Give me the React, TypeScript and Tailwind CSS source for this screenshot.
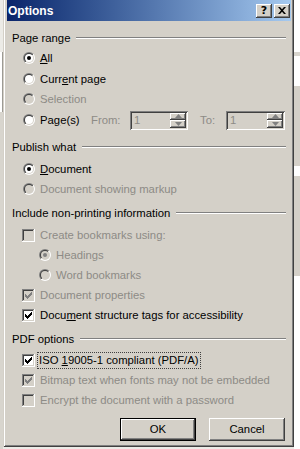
import React from 'react';

const FACE = '#d4d0c8';

function Radio({ checked = false, disabled = false }: { checked?: boolean; disabled?: boolean }) {
  return (
    <svg width="12" height="12" viewBox="0 0 12 12" className="shrink-0 block">
      <defs>
        <linearGradient id="rOuter" x1="0" y1="0" x2="1" y2="1">
          <stop offset="0.5" stopColor="#808080" />
          <stop offset="0.5" stopColor="#ffffff" />
        </linearGradient>
        <linearGradient id="rInner" x1="0" y1="0" x2="1" y2="1">
          <stop offset="0.5" stopColor="#404040" />
          <stop offset="0.5" stopColor="#d4d0c8" />
        </linearGradient>
      </defs>
      <circle cx="6" cy="6" r="6" fill="url(#rOuter)" />
      <circle cx="6" cy="6" r="5" fill="url(#rInner)" />
      <circle cx="6" cy="6" r="4" fill={disabled ? FACE : '#ffffff'} />
      {checked && <circle cx="6" cy="6" r="2" fill={disabled ? '#808080' : '#000000'} />}
    </svg>
  );
}

function Check({ checked = false, disabled = false }: { checked?: boolean; disabled?: boolean }) {
  const ys = [5, 6, 7, 6, 5, 4, 3];
  return (
    <svg width="13" height="13" viewBox="0 0 13 13" className="shrink-0 block">
      <rect x="0" y="0" width="13" height="13" fill="#ffffff" />
      <rect x="0" y="0" width="12" height="1" fill="#808080" />
      <rect x="0" y="0" width="1" height="12" fill="#808080" />
      <rect x="1" y="1" width="10" height="1" fill="#404040" />
      <rect x="1" y="1" width="1" height="10" fill="#404040" />
      <rect x="1" y="11" width="11" height="1" fill={FACE} />
      <rect x="11" y="1" width="1" height="11" fill={FACE} />
      <rect x="2" y="2" width="9" height="9" fill={disabled ? FACE : '#ffffff'} />
      {checked &&
        ys.map((y, i) => (
          <rect key={i} x={3 + i} y={y} width="1" height="3" fill={disabled ? '#808080' : '#000000'} />
        ))}
    </svg>
  );
}

function GroupHeader({ label }: { label: string }) {
  return (
    <div className="flex items-center h-[20px]">
      <span>{label}</span>
      <div className="flex-1 ml-[6px] h-[2px] border-t border-b border-t-[#808080] border-b-white" />
    </div>
  );
}

function RadioRow({
  children,
  checked,
  disabled,
  indent = 'ml-[11px]',
  className = '',
}: {
  children: React.ReactNode;
  checked?: boolean;
  disabled?: boolean;
  indent?: string;
  className?: string;
}) {
  return (
    <div className={`flex items-center h-[20px] ${indent} ${className}`}>
      <Radio checked={checked} disabled={disabled} />
      <span className={`ml-[5px] ${disabled ? 'text-[#8d8b86]' : 'text-black'}`}>{children}</span>
    </div>
  );
}

function CheckRow({
  children,
  checked,
  disabled,
  className = '',
}: {
  children: React.ReactNode;
  checked?: boolean;
  disabled?: boolean;
  className?: string;
}) {
  return (
    <div className={`flex items-center h-[20px] ml-[10px] ${className}`}>
      <Check checked={checked} disabled={disabled} />
      <span className={`ml-[5px] ${disabled ? 'text-[#8d8b86]' : 'text-black'}`}>{children}</span>
    </div>
  );
}

function SpinArrow({ up }: { up?: boolean }) {
  return (
    <div className="h-[9px] w-[16px] flex items-center justify-center bg-[#d4d0c8] shadow-[inset_-1px_-1px_0_#404040,inset_1px_1px_0_#ffffff,inset_-2px_-2px_0_#808080]">
      <svg width="7" height="4" viewBox="0 0 7 4">
        {up ? (
          <polygon points="3.5,0 7,4 0,4" fill="#808080" />
        ) : (
          <polygon points="0,0 7,0 3.5,4" fill="#808080" />
        )}
      </svg>
    </div>
  );
}

function Spin({ w }: { w: string }) {
  return (
    <div
      className={`flex items-stretch h-[19px] ${w} bg-[#d4d0c8] p-[2px] shadow-[inset_1px_1px_0_#808080,inset_-1px_-1px_0_#ffffff,inset_2px_2px_0_#404040,inset_-2px_-2px_0_#d4d0c8]`}
    >
      <span className="flex-1 pl-[2px] leading-[15px] text-[#8d8b86]">1</span>
      <div className="flex flex-col justify-between">
        <SpinArrow up />
        <SpinArrow />
      </div>
    </div>
  );
}

export default function App() {
  return (
    <div
      className="w-[300px] h-[449px] flex overflow-hidden bg-[#ecebe7] text-[11.3px] text-black"
      style={{ fontFamily: '"Liberation Sans", Arial, sans-serif' }}
    >
      {/* left background strip */}
      <div className="w-[3px] flex flex-col">
        <div className="h-[52px] bg-[#ecebe7]" />
        <div className="h-[60px] bg-white border-r border-[#9c9a94]" />
        <div className="flex-1 bg-[#d8d5ce]" />
      </div>

      {/* dialog window */}
      <div className="w-[291px] h-[447px] flex flex-col bg-[#d4d0c8] pl-[4px] pr-[3px] shadow-[inset_1px_0_0_#d4d0c8,inset_-1px_-1px_0_#404040,inset_2px_0_0_#ffffff,inset_-2px_-2px_0_#808080]">
        {/* title bar */}
        <div className="h-[21px] flex items-center pl-[1px] pr-[1px] bg-linear-to-r from-[#0a246a] to-[#a6caf0]">
          <span className="font-bold text-white text-[12px]">Options</span>
          <div className="ml-auto flex gap-[2px]">
            <div className="w-[16px] h-[14px] flex items-center justify-center bg-[#d4d0c8] shadow-[inset_-1px_-1px_0_#404040,inset_1px_1px_0_#ffffff,inset_-2px_-2px_0_#808080]">
              <span className="font-bold text-[11px] leading-none text-black" style={{ fontFamily: '"DejaVu Sans", sans-serif' }}>?</span>
            </div>
            <div className="w-[16px] h-[14px] flex items-center justify-center bg-[#d4d0c8] shadow-[inset_-1px_-1px_0_#404040,inset_1px_1px_0_#ffffff,inset_-2px_-2px_0_#808080]">
              <svg width="8" height="7" viewBox="0 0 8 7">
                <path d="M0 0h2l2 2.3L6 0h2L5 3.5L8 7H6L4 4.7L2 7H0l3-3.5z" fill="#000" />
              </svg>
            </div>
          </div>
        </div>

        {/* content */}
        <div className="flex flex-col pl-[5px] pr-[5px]">
          <div className="mt-[7px]">
            <GroupHeader label="Page range" />
          </div>
          <RadioRow checked>
            <u>A</u>ll
          </RadioRow>
          <RadioRow className="mt-[1px]">
            Curr<u>e</u>nt page
          </RadioRow>
          <RadioRow disabled>Selection</RadioRow>
          <div className="flex items-center h-[20px] ml-[11px] mt-[1px]">
            <Radio />
            <span className="ml-[5px] w-[51px]">
              Pa<u>g</u>e(s)
            </span>
            <span className="w-[39px] text-[#8d8b86]">From:</span>
            <Spin w="w-[58px]" />
            <span className="ml-[12px] w-[26px] text-[#8d8b86]">To:</span>
            <Spin w="w-[59px]" />
          </div>

          <div className="mt-[7px]">
            <GroupHeader label="Publish what" />
          </div>
          <RadioRow checked className="mt-[2px]">
            <u>D</u>ocument
          </RadioRow>
          <RadioRow disabled>Document showing markup</RadioRow>

          <div className="mt-[4px]">
            <GroupHeader label="Include non-printing information" />
          </div>
          <CheckRow disabled className="mt-[2px]">
            Create bookmarks using:
          </CheckRow>
          <RadioRow checked disabled indent="ml-[27px]">
            Headings
          </RadioRow>
          <RadioRow disabled indent="ml-[27px]">
            Word bookmarks
          </RadioRow>
          <CheckRow checked disabled>
            Document properties
          </CheckRow>
          <CheckRow checked>
            Docu<u>m</u>ent structure tags for accessibility
          </CheckRow>

          <div className="mt-[4px]">
            <GroupHeader label="PDF options" />
          </div>
          <div className="flex items-center h-[20px] ml-[10px] mt-[1px]">
            <Check checked />
            <span className="ml-[3px] px-[1px] leading-[15px] outline outline-1 outline-dotted outline-[#404040]">
              ISO <u>1</u>9005-1 compliant (PDF/A)
            </span>
          </div>
          <CheckRow checked disabled>
            Bitmap text when fonts may not be embedded
          </CheckRow>
          <CheckRow disabled>Encrypt the document with a password</CheckRow>

          <div className="flex justify-end gap-[13px] mt-[8px] mr-[1px]">
            <div className="w-[76px] h-[23px] flex items-center justify-center border border-black bg-[#d4d0c8] shadow-[inset_-1px_-1px_0_#404040,inset_1px_1px_0_#ffffff,inset_-2px_-2px_0_#808080]">
              OK
            </div>
            <div className="w-[76px] h-[23px] flex items-center justify-center bg-[#d4d0c8] shadow-[inset_-1px_-1px_0_#404040,inset_1px_1px_0_#ffffff,inset_-2px_-2px_0_#808080,inset_2px_2px_0_#d4d0c8]">
              Cancel
            </div>
          </div>
        </div>
      </div>

      {/* right background strip */}
      <div className="w-[6px] flex flex-col">
        <div className="h-[52px] bg-white" />
        <div className="h-[4px] bg-[#d8d5ce]" />
        <div className="h-[30px] bg-white" />
        <div className="h-[80px] bg-[#d4d0c8]" />
        <div className="h-[10px] bg-white" />
        <div className="h-[100px] bg-[#d4d0c8]" />
        <div className="flex-1 bg-white" />
      </div>
    </div>
  );
}
